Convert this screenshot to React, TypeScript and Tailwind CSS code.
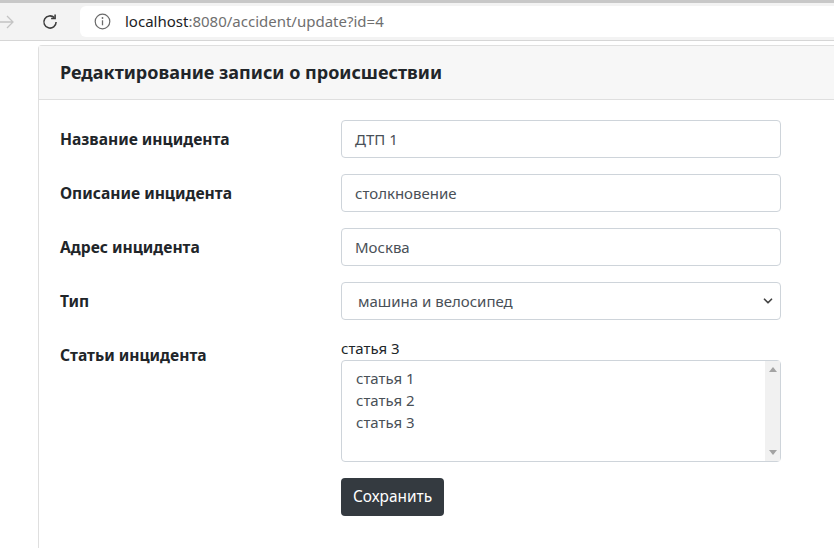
import { ChevronDown } from "lucide-react";

const font = { fontFamily: '"Noto Sans", "Open Sans", sans-serif' };

function TextRow({ label, value }: { label: string; value: string }) {
  return (
    <div className="flex mb-4">
      <div className="w-[281px] pt-[7px] leading-6 text-[15.6px] font-bold text-[#212529]">{label}</div>
      <div className="w-[440px] h-[38px] border border-[#ced4da] rounded bg-white flex items-center px-[13px] text-[15px] text-[#495057]">
        {value}
      </div>
    </div>
  );
}

export default function App() {
  return (
    <div className="w-[834px] h-[548px] overflow-hidden bg-white flex flex-col" style={font}>
      {/* browser toolbar */}
      <div className="h-[3px] bg-[#c8c8c8]" />
      <div className="h-[38px] bg-[#f3f3f3] border-b border-[#d6d6d6] flex items-start pt-[3px]">
        <div className="w-[80px] h-[31px] flex items-center">
          <svg width="18" height="18" viewBox="0 0 18 18" className="-ml-[3px]">
            <path d="M1 9h15M10 3l6 6-6 6" fill="none" stroke="#c4c4c4" strokeWidth="1.3" />
          </svg>
          <svg width="20" height="20" viewBox="0 0 18 18" className="ml-[25px]">
            <path d="M14.5 9a5.5 5.5 0 1 1-1.6-3.9" fill="none" stroke="#3c3c3c" strokeWidth="1.4" />
            <path d="M13.6 2.2v3.6h-3.6" fill="none" stroke="#3c3c3c" strokeWidth="1.4" />
          </svg>
        </div>
        <div className="flex-1 h-[31px] bg-white rounded-l-md flex items-center pl-[14px] text-[15px]">
          <svg width="17" height="17" viewBox="0 0 17 17">
            <circle cx="8.5" cy="8.5" r="7.3" fill="none" stroke="#6b6b6b" strokeWidth="1.2" />
            <path d="M8.5 7.3v5" stroke="#6b6b6b" strokeWidth="1.3" />
            <circle cx="8.5" cy="5" r="0.9" fill="#6b6b6b" />
          </svg>
          <span className="ml-[14px] text-[#202124]">localhost</span>
          <span className="text-[#6f6f6f]">:8080/accident/update?id=4</span>
        </div>
      </div>

      {/* page */}
      <div className="flex-1 pt-[4px] pl-[38px]">
        <div className="h-full border-l border-t border-[#dfdfdf] rounded-tl-[4px]">
          <div className="h-[54px] bg-[#f7f7f7] border-b border-[#dfdfdf] flex items-center pl-[21px]">
            <h5 className="text-[18px] font-bold text-[#212529]">Редактирование записи о происшествии</h5>
          </div>
          <div className="pt-5 pl-[21px]">
            <TextRow label="Название инцидента" value="ДТП 1" />
            <TextRow label="Описание инцидента" value="столкновение" />
            <TextRow label="Адрес инцидента" value="Москва" />

            <div className="flex mb-4">
              <div className="w-[281px] pt-[7px] leading-6 text-[15.6px] font-bold text-[#212529]">Тип</div>
              <div className="w-[440px] h-[38px] border border-[#ced4da] rounded bg-white flex items-center pl-[16px] pr-[5px] text-[15px] text-[#495057]">
                <span className="flex-1">машина и велосипед</span>
                <ChevronDown size={14} strokeWidth={3} className="text-[#444]" />
              </div>
            </div>

            <div className="flex">
              <div className="w-[281px] pt-[7px] leading-6 text-[15.6px] font-bold text-[#212529]">Статьи инцидента</div>
              <div className="w-[440px]">
                <div className="leading-6 text-[15px] text-[#212529]">статья 3</div>
                <div className="h-[102px] border border-[#ced4da] rounded bg-white flex">
                  <div className="flex-1 pl-[14px] pt-[6px] text-[15px] leading-[22px] text-[#495057]">
                    <div>статья 1</div>
                    <div>статья 2</div>
                    <div>статья 3</div>
                  </div>
                  <div className="w-[15px] bg-[#f1f1f1] flex flex-col items-center justify-between py-[6px]">
                    <svg width="8" height="5" viewBox="0 0 8 5"><path d="M0 5L4 0L8 5Z" fill="#a3a3a3" /></svg>
                    <svg width="8" height="5" viewBox="0 0 8 5"><path d="M0 0L4 5L8 0Z" fill="#a3a3a3" /></svg>
                  </div>
                </div>
                <button className="mt-4 h-[38px] px-[12px] rounded bg-[#343a40] text-white text-[15.4px]">Сохранить</button>
              </div>
            </div>
          </div>
        </div>
      </div>
    </div>
  );
}
